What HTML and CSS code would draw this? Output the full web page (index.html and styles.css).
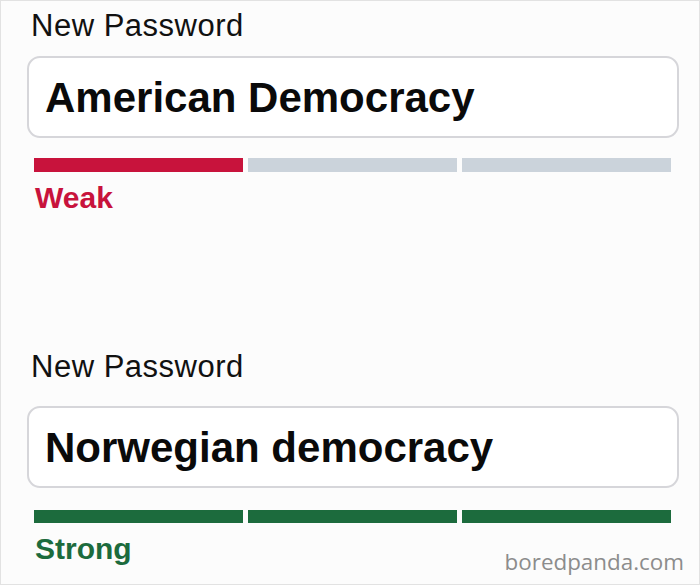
FILE: index.html
```html
<!DOCTYPE html>
<html>
<head>
<meta charset="utf-8">
<link rel="stylesheet" href="styles.css">
</head>
<body>
<div class="frame">
  <section class="field first">
    <div class="label">New Password</div>
    <div class="input">American Democracy</div>
    <div class="meter">
      <span class="seg weak"></span>
      <span class="seg empty"></span>
      <span class="seg empty"></span>
    </div>
    <div class="status weak-text">Weak</div>
  </section>
  <section class="field second">
    <div class="label">New Password</div>
    <div class="input">Norwegian democracy</div>
    <div class="meter">
      <span class="seg strong"></span>
      <span class="seg strong"></span>
      <span class="seg strong"></span>
    </div>
    <div class="status strong-text">Strong</div>
  </section>
  <div class="watermark">boredpanda.com</div>
</div>
</body>
</html>
```
FILE: styles.css
```css
html, body {
  margin: 0;
  padding: 0;
  background: #fcfcfc;
}
.frame {
  position: relative;
  width: 700px;
  height: 585px;
  box-sizing: border-box;
  border: 1px solid #e2e2e2;
  background: #fcfcfc;
  font-family: "Liberation Sans", Arial, sans-serif;
  color: #111;
  overflow: hidden;
}
.field {
  display: flex;
  flex-direction: column;
}
.first {
  padding-top: 7px;
}
.second {
  padding-top: 134px;
}
.label {
  font-size: 31px;
  line-height: 36px;
  letter-spacing: 0.5px;
  padding-left: 30px;
  color: #111;
}
.input {
  margin: 12px 20px 0 26px;
  height: 48px;
  padding: 16px 16px 14px 16px;
  border: 2px solid #d6d6da;
  border-radius: 13px;
  background: #fff;
  font-weight: bold;
  font-size: 42px;
  line-height: 48px;
  color: #0a0a0a;
}
.second .input {
  margin-top: 21px;
}
.meter {
  display: flex;
  gap: 5px;
  margin: 20px 28px 0 33px;
  height: 14px;
}
.second .meter {
  margin-top: 22px;
  height: 13px;
}
.seg {
  flex: 1;
  display: block;
}
.weak { background: #c8133c; }
.empty { background: #cbd3db; }
.strong { background: #1c6b3d; }
.status {
  margin-top: 9px;
  padding-left: 34px;
  font-weight: bold;
  font-size: 30px;
  line-height: 34px;
}
.weak-text { color: #c8133c; }
.strong-text { color: #1c6b3d; }
.watermark {
  position: absolute;
  right: 15px;
  bottom: 7px;
  font-family: "Open Sans", sans-serif;
  font-size: 22.4px;
  line-height: 30px;
  color: #8c8c8c;
}
```
